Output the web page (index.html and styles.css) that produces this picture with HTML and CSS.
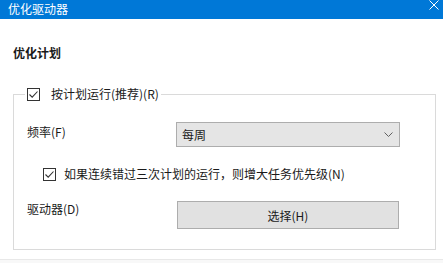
FILE: index.html
```html
<!DOCTYPE html>
<html lang="zh-CN">
<head>
    <meta charset="UTF-8">
    <title>优化驱动器</title>
    <link rel="stylesheet" href="styles.css">
</head>
<body>
    <div class="window">
        <div class="titlebar">
            <span class="title">优化驱动器</span>
            <svg class="close" width="10" height="10" viewBox="0 0 10 10">
                <path d="M0.5 0.5 L9.5 9.5 M9.5 0.5 L0.5 9.5" stroke="#fff" stroke-width="1" fill="none"/>
            </svg>
        </div>

        <div class="content">
            <div class="heading">优化计划</div>

            <fieldset class="group">
                <legend>
                    <label class="check">
                        <svg class="box" width="13" height="13" viewBox="0 0 13 13">
                            <rect x="0.5" y="0.5" width="12" height="12" fill="#fff" stroke="#333"/>
                            <path d="M2.5 6.5 L5.2 9.2 L10.5 3.5" stroke="#333" stroke-width="1.1" fill="none"/>
                        </svg>
                        <span>按计划运行(推荐)(R)</span>
                    </label>
                </legend>

                <div class="row freq">
                    <span class="row-label">频率(F)</span>
                    <div class="select">
                        <span>每周</span>
                        <svg width="9" height="5" viewBox="0 0 9 5">
                            <path d="M0.5 0.5 L4.5 4.5 L8.5 0.5" stroke="#606060" stroke-width="1" fill="none"/>
                        </svg>
                    </div>
                </div>

                <div class="row sub">
                    <label class="check">
                        <svg class="box" width="13" height="13" viewBox="0 0 13 13">
                            <rect x="0.5" y="0.5" width="12" height="12" fill="#fff" stroke="#333"/>
                            <path d="M2.5 6.5 L5.2 9.2 L10.5 3.5" stroke="#333" stroke-width="1.1" fill="none"/>
                        </svg>
                        <span>如果连续错过三次计划的运行，则增大任务优先级(N)</span>
                    </label>
                </div>

                <div class="row drive">
                    <span class="row-label">驱动器(D)</span>
                    <button class="btn">选择(H)</button>
                </div>
            </fieldset>
        </div>
        <div class="footer"></div>
    </div>
</body>
</html>
```

FILE: styles.css
```css
html, body {
    margin: 0;
    padding: 0;
    background: #fff;
}

body {
    font-family: "Noto Sans CJK SC", sans-serif;
    font-size: 12px;
    line-height: 16px;
    color: #1a1a1a;
}

.window {
    width: 443px;
    height: 263px;
    display: flex;
    flex-direction: column;
    overflow: hidden;
}

.titlebar {
    height: 19px;
    box-sizing: border-box;
    flex: none;
    background-color: #0078d7;
    display: flex;
    justify-content: space-between;
    align-items: flex-start;
    padding: 2px 4px 0 8px;
}

.title {
    color: #fff;
    line-height: 14px;
}

.close {
    margin-top: -2px;
}

.content {
    flex: 1;
    padding: 0 7px 0 13px;
}

.heading {
    font-weight: bold;
    margin-top: 26px;
}

.group {
    margin: 25px 0 0 0;
    padding: 0 13px 20px 13px;
    border: 1px solid #dadada;
    min-width: 0;
}

.group legend {
    padding: 0 2px;
    margin-left: -2px;
}

.check {
    display: flex;
    align-items: center;
    gap: 11px;
}

.check .box {
    flex: none;
    margin-top: 1px;
}

.row {
    display: flex;
    align-items: flex-start;
}

.row-label {
    width: 149px;
    flex: none;
}

.freq {
    margin-top: 20px;
}

.freq .row-label {
    padding-top: 2px;
}

.select {
    width: 224px;
    height: 25px;
    box-sizing: border-box;
    background-color: #e5e5e5;
    border: 1px solid #adadad;
    display: flex;
    align-items: center;
    justify-content: space-between;
    padding: 0 6px 0 5px;
}

.sub {
    margin-top: 19px;
    padding-left: 16px;
}

.sub .check {
    gap: 8px;
}

.drive {
    margin-top: 19px;
}

.btn {
    width: 222px;
    height: 28px;
    margin-left: 1px;
    background-color: #e1e1e1;
    border: 1px solid #adadad;
    font-family: inherit;
    font-size: 12px;
    color: #1a1a1a;
    padding: 0;
}

.footer {
    height: 3px;
    flex: none;
    border-top: 1px solid #e8e8e8;
    background: #f8f8f8;
}
```
